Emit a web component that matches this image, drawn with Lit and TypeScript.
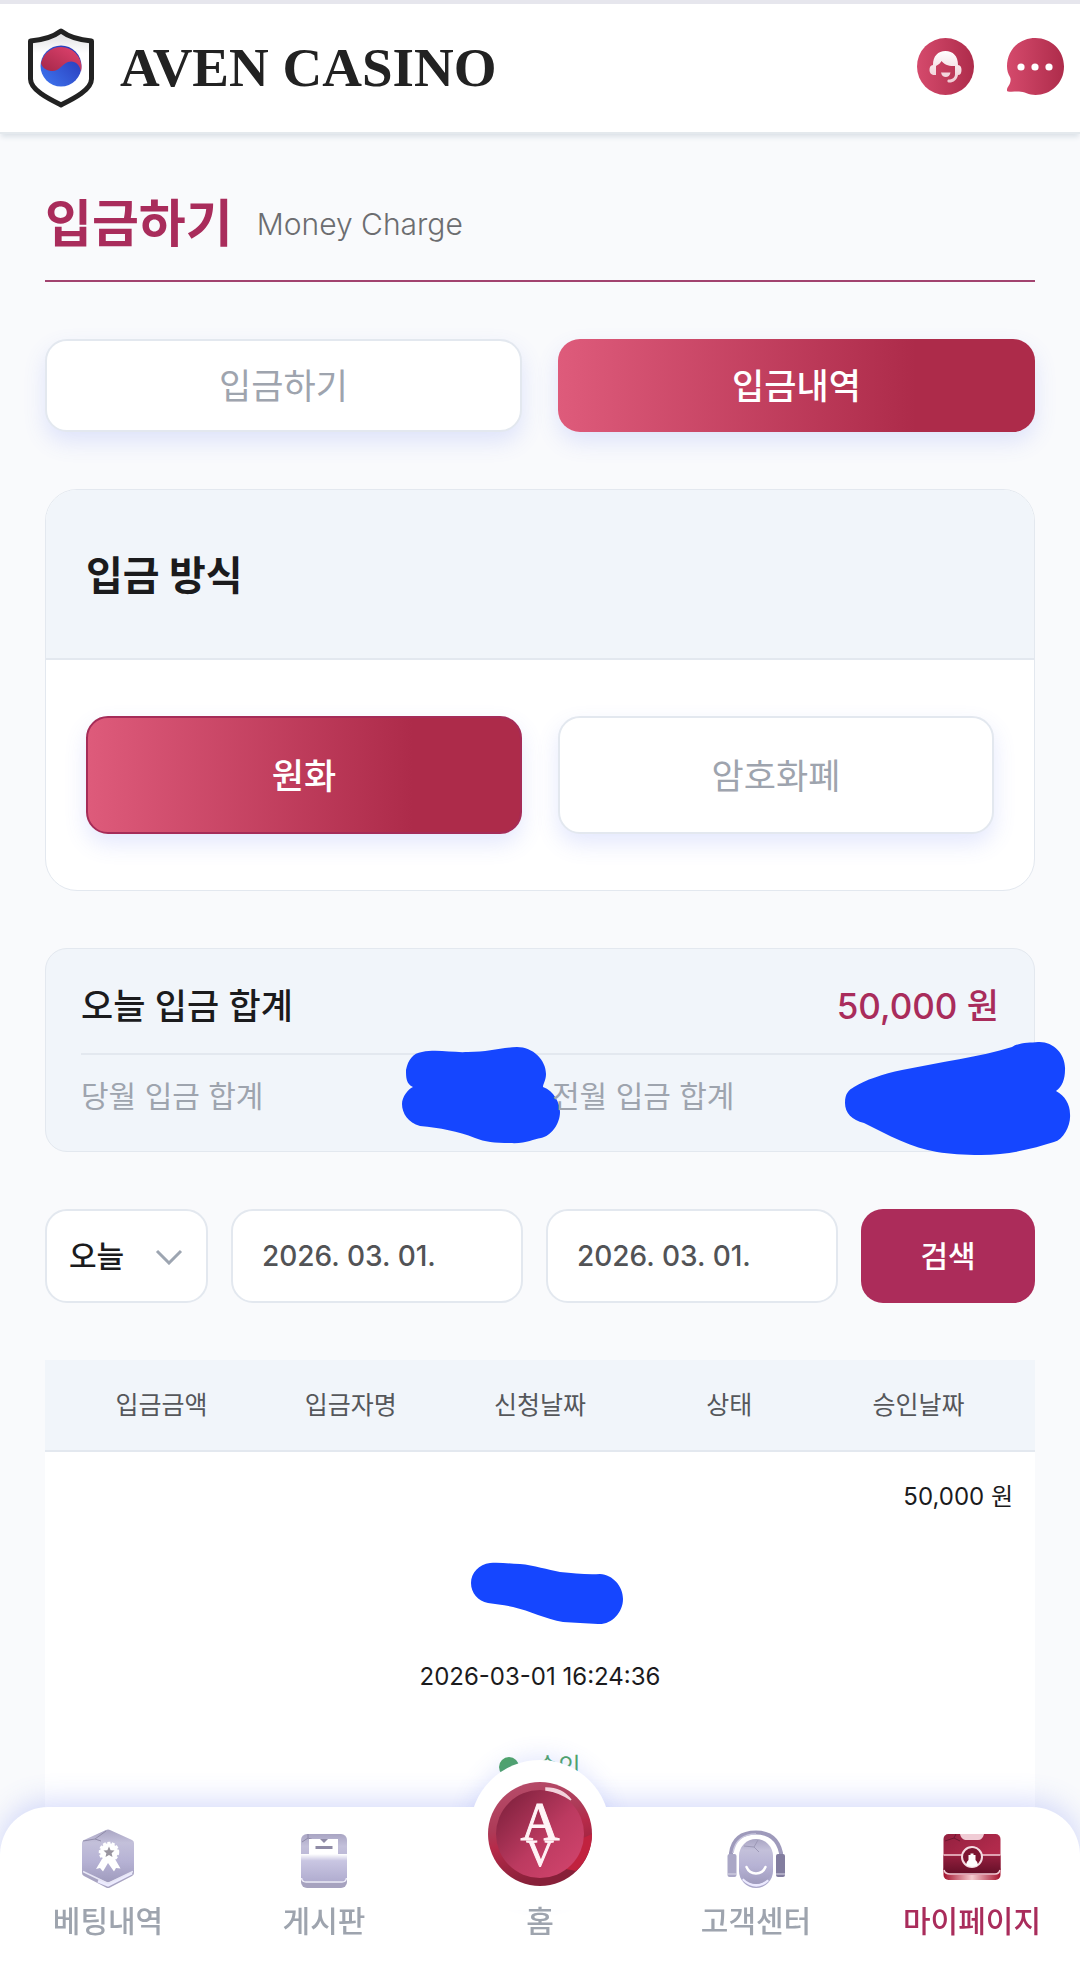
import { LitElement, html, css, svg } from "lit";
import { customElement, state } from "lit/decorators.js";
import { classMap } from "lit/directives/class-map.js";

const shield = html`<svg class="shield" viewBox="28 28 66 80" aria-hidden="true">
  <defs>
    <linearGradient id="sh" x1="0" y1="0" x2="0" y2="1"><stop offset="0" stop-color="#dcdcde"/><stop offset=".3" stop-color="#fff"/></linearGradient>
    <linearGradient id="rd" x1="1" y1="0" x2="0" y2="1"><stop offset="0" stop-color="#e2436f"/><stop offset="1" stop-color="#a32748"/></linearGradient>
    <linearGradient id="bl" x1="1" y1="0" x2="0" y2="1"><stop offset="0" stop-color="#2530b0"/><stop offset="1" stop-color="#3f78f2"/></linearGradient>
  </defs>
  <path d="M61 31 C69 37 79 40 91.500 41 V79 C91.500 90 73 99 61 105 C49 99 30.500 90 30.500 79 V41 C43 40 53 37 61 31Z" fill="url(#sh)" stroke="#222" stroke-width="5" stroke-linejoin="round"/>
  <circle cx="61" cy="66" r="20.500" fill="url(#bl)"/>
  <path d="M41 63 A20.500 20.500 0 0 1 81 72 C80 64 74 60 68 62 C62 64 59 72 51 71 C45 70 42 67 41 63Z" fill="url(#rd)"/>
</svg>`;

const agentIcon = html`<svg class="round-icon" viewBox="0 0 57 57" aria-hidden="true">
  <defs>
    <linearGradient id="ag" x1="0" x2="1"><stop offset="0" stop-color="#d54a6c"/><stop offset="1" stop-color="#ae2c4b"/></linearGradient>
    <linearGradient id="aw" x1="0" y1="0" x2="0" y2="1"><stop offset="0" stop-color="#fff"/><stop offset="1" stop-color="#eec9d1"/></linearGradient>
  </defs>
  <circle cx="28.500" cy="28.500" r="28.500" fill="url(#ag)"/>
  <path d="M16 27 C16 18 21 13 28.500 13 C36 13 41 18 41 27 C43.500 27.500 44.500 29 44.500 32 C44.500 35 43.500 37 41 37 C40 42 36 45 31.500 44.500 C30 44 30 42 31.500 41.500 C35 41.500 38 40 38 36 V28 C32 28.500 27 26.500 24.500 23 C23.500 25 21 27 19 28 V37 C15 37.500 12.500 35.500 12.500 32 C12.500 29 13.500 27.500 16 27Z" fill="url(#aw)"/>
  <path d="M24 34.500 H33.500 C33 37.500 31 39 28.800 39 C26.500 39 24.500 37.500 24 34.500Z" fill="#f3d5dc"/>
</svg>`;

const chatIcon = html`<svg class="round-icon" viewBox="0 0 57 57" aria-hidden="true">
  <defs><linearGradient id="ch" x1="0" x2="1"><stop offset="0" stop-color="#d54a6c"/><stop offset="1" stop-color="#ae2c4b"/></linearGradient></defs>
  <path d="M28.500 0 C44 0 57 12 57 28.500 C57 46 43 57 28.500 57 C22 57 17 53.500 12 53.500 C8 53.500 4 54 1 53.500 C-1 53 0 50 1.500 48 C3 46 4.500 42 3 39 C1 36 0 32 0 28.500 C0 12 12 0 28.500 0Z" fill="url(#ch)"/>
  <circle cx="14" cy="29" r="3.600" fill="#fff"/><circle cx="28" cy="29" r="3.600" fill="#fff"/><circle cx="42" cy="29" r="3.600" fill="#fff"/>
</svg>`;

const lilac = (id: string) => svg`<linearGradient id=${id} x1="0" y1="0" x2="0" y2="1"><stop offset="0" stop-color="#a9a5c3"/><stop offset=".25" stop-color="#c3c0da"/><stop offset=".6" stop-color="#b6b2d4"/><stop offset="1" stop-color="#9f9bbd"/></linearGradient>`;

const betsIcon = html`<svg class="nav-icon" viewBox="0 0 60 60" aria-hidden="true">
  <defs>${lilac("l1")}</defs>
  <path d="M4 40 L30 54 L56 40 V44 Q56 46 54 47 L32 58.500 Q30 59.500 28 58.500 L6 47 Q4 46 4 44Z" fill="#a8a4c2"/>
  <path d="M20 52 L30 56 L54 44" fill="none" stroke="#ecebff" stroke-width="3"/>
  <path d="M28 1 Q30 0 32 1 L54 11 Q56 12 56 14 V40 Q56 41.500 54 42.500 L32 53 Q30 54 28 53 L6 42.500 Q4 41.500 4 40 V14 Q4 12 6 11Z" fill="url(#l1)"/>
  <path d="M5 12 L17 10 L28 2 M17 10 L23 12" fill="none" stroke="#908ca9" stroke-width="1"/>
  <path d="M5 42.500 L28 53.500 Q30 54.500 32 53.500 L55 42.500" fill="none" stroke="#e8e7f6" stroke-width="1.500"/>
  <path d="M24 30 L18 40 L22 39 L25 42.500 L30 34 L36 42.500 L38 39 L42.500 39.500 L37 30Z" fill="#fff"/>
  <circle cx="31" cy="23" r="9" fill="#fff" stroke="#fff" stroke-width="2.500" stroke-dasharray="3 1.500"/>
  <path d="M31 17.500 L32.600 21.200 L36.500 21.600 L33.600 24.200 L34.500 28 L31 26 L27.500 28 L28.400 24.200 L25.500 21.600 L29.400 21.200Z" fill="#99959f"/>
</svg>`;

const boardIcon = html`<svg class="nav-icon" viewBox="0 0 60 60" aria-hidden="true">
  <defs>${lilac("l2")}<linearGradient id="fd" x1="0" y1="0" x2="0" y2="1"><stop offset="0" stop-color="#fff"/><stop offset=".25" stop-color="#c9c6e2"/><stop offset="1" stop-color="#b1add0"/></linearGradient></defs>
  <rect x="7" y="40" width="46" height="19" rx="6" fill="#a6a2bf"/>
  <rect x="7" y="5" width="46" height="49" rx="6" fill="url(#l2)"/>
  <path d="M8 13 L14 9 L20 11 M14 9 V5" fill="none" stroke="#8e8aa8"/>
  <rect x="15" y="10" width="29" height="20" fill="#fff"/>
  <path d="M26 10 H34 L30 14Z" fill="#8f8ba6"/>
  <rect x="21.500" y="17" width="17" height="3" fill="#8f8ba6"/>
  <path d="M7 25 H53 V48 Q53 52 48 52 H12 Q7 52 7 48Z" fill="url(#fd)"/>
  <path d="M7.500 49 Q8 53 12 53 H48 Q52 53 52.500 49" fill="none" stroke="#f0effa" stroke-width="1.500"/>
</svg>`;

const helpIcon = html`<svg class="nav-icon" viewBox="0 0 60 60" aria-hidden="true">
  <defs>${lilac("l3")}</defs>
  <path d="M5 28 V24 C7 10 16 3.500 30 3.500 C44 3.500 52 10 55 24 V28" fill="none" stroke="#9e9abb" stroke-width="4"/>
  <path d="M7 24 C9 11 18 5 30 5" fill="none" stroke="#cac8df" stroke-width="1.500"/>
  <rect x="13" y="14" width="34" height="45" rx="17" fill="#aaa7ca"/>
  <path d="M17 50 Q30 62 42 51" stroke="#eceaff" stroke-width="3" fill="none"/>
  <rect x="13" y="10" width="34" height="45" rx="17" fill="url(#l3)"/>
  <path d="M18 17 L28 18 L32 11 M28 18 L33 23" fill="none" stroke="#9c99b6"/>
  <path d="M20.500 38 C24 46.500 36 46.500 39.500 38" fill="none" stroke="#fff" stroke-width="2.500" stroke-linecap="round"/>
  <rect x="1.500" y="25" width="9" height="23" rx="2" fill="#aaa7c6"/><rect x="50" y="25" width="9" height="23" rx="2" fill="#827d9f"/>
  <path d="M1.500 45 H10.500 M50 45 H59" stroke="#dddbea" stroke-width="1"/>
</svg>`;

const walletIcon = html`<svg class="nav-icon" viewBox="0 0 60 60" aria-hidden="true">
  <defs>
    <linearGradient id="wt" x1="0" y1="0" x2="1" y2="1"><stop offset="0" stop-color="#93203f"/><stop offset=".6" stop-color="#b02a4b"/><stop offset="1" stop-color="#b82d4e"/></linearGradient>
    <linearGradient id="wl" x1="0" y1="0" x2="0" y2="1"><stop offset="0" stop-color="#96203f"/><stop offset="1" stop-color="#650f28"/></linearGradient>
    <linearGradient id="wb" x1="0" x2="1"><stop offset="0" stop-color="#a5122e"/><stop offset=".5" stop-color="#f5ccd0"/><stop offset="1" stop-color="#a5122e"/></linearGradient>
  </defs>
  <rect x="1.500" y="36" width="57" height="15" rx="5" fill="url(#wb)"/>
  <rect x="1.500" y="5" width="57" height="41" rx="5" fill="url(#wt)"/>
  <path d="M1.500 26 H58.500 V40 Q58.500 45 53.500 45 H6.500 Q1.500 45 1.500 40Z" fill="url(#wl)"/>
  <path d="M18 5 H42 C41 9 39 11 36 11 H25 C21 11 19 9 18 5Z" fill="#f0ccd5"/>
  <path d="M3 12 L12 9 L18 12 M12 9 L14 5" fill="none" stroke="#6e1730"/>
  <path d="M1.500 26 H58.500 M2 41 Q3 45 8 45 H53 Q57 45 58 41" fill="none" stroke="#f2ccd5" stroke-width="1.500"/>
  <circle cx="30" cy="28" r="10" fill="#7d1632" stroke="#f4dce2" stroke-width="2"/>
  <path d="M26.500 26 H28.500 V24.500 H31.500 V26 H33.500 V31 Q36 33 36 36 Q30 39.500 24 36 Q24 33 26.500 31Z" fill="#fff"/>
</svg>`;

const medallion = html`<svg class="medallion" viewBox="0 0 104 104" aria-hidden="true">
  <defs>
    <linearGradient id="m1" x1="0" y1="0" x2=".3" y2="1"><stop offset="0" stop-color="#b8506e"/><stop offset=".45" stop-color="#ad3a57"/><stop offset=".6" stop-color="#b62a49"/><stop offset="1" stop-color="#872039"/></linearGradient>
    <linearGradient id="m2" x1="0" y1="0" x2="1" y2="1"><stop offset=".15" stop-color="#892543"/><stop offset=".55" stop-color="#bc3a60"/><stop offset="1" stop-color="#d5466f"/></linearGradient>
  </defs>
  <circle cx="52" cy="52" r="52" fill="url(#m1)"/>
  <path d="M104 52 A52 52 0 0 1 88 89 L78 87 Q92 76 95 56Z" fill="#c1223f"/>
  <circle cx="52" cy="52" r="44" fill="url(#m2)"/>
  <path d="M58 6 Q74 6 83 18 Q72 10 58 8Z" fill="#f3d3dc" stroke="#f3d3dc" stroke-width="1.500"/>
  <text class="mono" x="52" y="58" font-size="54" text-anchor="middle">A</text>
  <text class="mono" x="52" y="84" font-size="38" text-anchor="middle">V</text>
</svg>`;

@customElement("app-root")
export class AppRoot extends LitElement {
  @state() private tab = 1;
  @state() private method = 0;

  static styles = css`
    :host {
      --crimson: #a92c5b;
      --muted: #9ea4ae;
      --line: #e3e8ef;
      --panel: #f1f5fa;
      --fade: linear-gradient(90deg, #de5b7b, #ad2b4a 75%);
      --glow: 0 10px 22px rgba(88, 110, 240, 0.16);
      display: block;
      min-height: 100vh;
      background: #f9fafc;
      color: #1b1b1d;
      font-family: Inter, "Noto Sans CJK KR", sans-serif;
      font-size: 30px;
    }
    * { box-sizing: border-box; }
    button, input, select { font: inherit; color: inherit; margin: 0; }
    button { border: 0; padding: 0; background: none; cursor: pointer; }
    a { color: inherit; text-decoration: none; }

    .header {
      display: flex;
      align-items: center;
      justify-content: space-between;
      height: 134px;
      padding: 0 16px 0 28px;
      background: #fff;
      border-top: 4px solid #e6e6ed;
      border-bottom: 2px solid #e4e9ed;
      box-shadow: 0 4px 5px -1px #dce2e8;
    }
    .brand { display: flex; align-items: center; gap: 26px; }
    .shield { width: 66px; height: 80px; }
    .brand-name {
      font: bold 55px/80px "Liberation Serif", serif;
      color: #222;
    }
    .actions { display: flex; gap: 33px; padding-bottom: 4px; }
    .action { display: flex; }
    .round-icon { width: 57px; height: 57px; }

    .main {
      display: flex;
      flex-direction: column;
      gap: 57px;
      padding: 48px 45px 0;
    }
    .heading {
      display: flex;
      align-items: center;
      gap: 24px;
      height: 100px;
      padding-bottom: 14px;
      border-bottom: 2px solid #a2436f;
    }
    .title { margin: 0; font-size: 51px; line-height: 80px; font-weight: 700; color: var(--crimson); }
    .subtitle { font-size: 30px; font-weight: 300; color: #6c6d70; }

    .pair { display: grid; grid-template-columns: 1fr 1fr; gap: 36px; }
    .choice {
      height: 93px;
      padding-bottom: 4px;
      border: 2px solid var(--line);
      border-radius: 22px;
      background: #fff;
      color: var(--muted);
      font-size: 35px;
      box-shadow: var(--glow);
    }
    .choice.tall { height: 118px; }
    .choice.on { border: 0; background: var(--fade); color: #fff; font-weight: 500; }
    .choice.tall.on { border: 2px solid #a52c58; background-origin: border-box; }

    .card {
      border: 1px solid var(--line);
      border-radius: 32px;
      background: #fff;
      overflow: hidden;
    }
    .card-title {
      margin: 0;
      padding: 4px 40px 0;
      font-size: 40px;
      line-height: 164px;
      font-weight: 700;
      background: var(--panel);
      border-bottom: 2px solid var(--line);
    }
    .card-body { padding: 56px 40px; }

    .totals {
      padding: 0 35px;
      border: 1px solid var(--line);
      border-radius: 22px;
      background: var(--panel);
    }
    .today {
      display: flex;
      justify-content: space-between;
      padding: 22px 0 12px;
      line-height: 70px;
      font-size: 35px;
      font-weight: 500;
      border-bottom: 2px solid var(--line);
    }
    .amount { color: var(--crimson); }
    .months {
      display: grid;
      grid-template-columns: 1fr 1fr;
      gap: 24px;
      padding: 16px 0 30px;
      line-height: 50px;
      color: var(--muted);
    }
    .month { position: relative; }
    .ink { position: absolute; fill: #1546ff; }
    .ink-a { left: 321px; top: -25px; width: 160px; height: 98px; }
    .ink-b { left: 292px; top: -31px; width: 228px; height: 116px; }
    .ink-c { left: 50%; margin-left: -69px; top: 20px; width: 153px; height: 64px; }

    .search { display: grid; grid-template-columns: 163fr 292fr 292fr 174fr; gap: 23px; }
    .field, .submit { height: 94px; width: 100%; min-width: 0; border-radius: 22px; }
    .field { border: 2px solid var(--line); background: #fff; }
    .period { position: relative; display: flex; }
    .period .field { appearance: none; padding: 0 22px; font-weight: 500; }
    .chevron { position: absolute; right: 25px; top: 40px; width: 28px; height: 16px; pointer-events: none; }
    .date { padding: 0 29px; font-size: 28px; font-weight: 500; color: #525356; }
    .submit { padding-bottom: 4px; background: #ac2c5a; color: #fff; font-weight: 500; }

    .table { display: block; background: #fff; }
    .thead, .tbody { display: block; }
    .thead-row {
      display: grid;
      grid-template-columns: repeat(5, 1fr);
      padding: 0 22px;
      background: var(--panel);
      border-bottom: 2px solid var(--line);
      color: #55575b;
    }
    .th { padding: 0; font-size: 25px; line-height: 90px; font-weight: 400; text-align: center; }
    .row { display: block; }
    .td { display: block; position: relative; height: 90px; padding: 0 22px; font-size: 24px; line-height: 90px; text-align: center; }
    .td.num { text-align: right; }
    .status { display: flex; align-items: center; justify-content: center; gap: 17px; color: #4fa567; }
    .dot { width: 20px; height: 20px; border-radius: 50%; background: #4fa567; }

    .nav {
      position: fixed;
      left: 0;
      right: 0;
      bottom: 0;
      display: grid;
      grid-template-columns: repeat(5, 1fr);
      height: 156px;
      padding-top: 22px;
      background: #fff;
      border-radius: 48px 48px 0 0;
      box-shadow: 0 -6px 28px rgba(88, 110, 240, 0.24);
    }
    .nav-item {
      position: relative;
      display: flex;
      flex-direction: column;
      align-items: center;
      gap: 8px;
      line-height: 48px;
      color: var(--muted);
      font-weight: 500;
    }
    .nav-item.current { color: var(--crimson); }
    .nav-icon { width: 60px; height: 60px; }
    .home { justify-content: flex-end; padding-bottom: 18px; }
    .disc {
      position: absolute;
      top: -69px;
      display: grid;
      place-items: center;
      width: 140px;
      height: 140px;
      padding-top: 7px;
      border-radius: 50%;
      background: #fff;
      box-shadow: 0 -4px 22px rgba(88, 110, 240, 0.16);
    }
    .disc::after {
      content: "";
      position: absolute;
      inset: 47px -30px -10px;
      background: #fff;
    }
    .medallion { position: relative; z-index: 1; width: 104px; height: 104px; }
    .home-label { position: relative; z-index: 1; }
    .mono { font-family: "Liberation Serif", serif; fill: #fff3f6; stroke: #fff3f6; stroke-width: 1px; }
  `;

  private choice(label: string, on: boolean, tall: boolean, pick: () => void) {
    return html`<button type="button" class=${classMap({ choice: true, on, tall })} aria-pressed=${on} @click=${pick}>${label}</button>`;
  }

  render() {
    return html`
      <header class="header">
        <a class="brand" href="#">${shield}<span class="brand-name">AVEN CASINO</span></a>
        <div class="actions">
          <a class="action" href="#" aria-label="고객센터">${agentIcon}</a>
          <a class="action" href="#" aria-label="채팅">${chatIcon}</a>
        </div>
      </header>
      <main class="main">
        <div class="heading"><h1 class="title">입금하기</h1><span class="subtitle">Money Charge</span></div>
        <div class="pair">
          ${["입금하기", "입금내역"].map((t, i) => this.choice(t, this.tab === i, false, () => (this.tab = i)))}
        </div>
        <section class="card">
          <h2 class="card-title">입금 방식</h2>
          <div class="card-body pair">
            ${["원화", "암호화폐"].map((t, i) => this.choice(t, this.method === i, true, () => (this.method = i)))}
          </div>
        </section>
        <section class="totals">
          <div class="today"><span>오늘 입금 합계</span><span class="amount">50,000 원</span></div>
          <div class="months">
            <div class="month">당월 입금 합계
              <svg class="ink ink-a" viewBox="402 1046 160 98" aria-hidden="true"><path d="M422 1052 C438 1049 452 1053 468 1052 C488 1052 500 1048 517 1047 C533 1047 546 1060 546 1074 C546 1080 543 1084 543 1087 C554 1091 560 1103 560 1112 C560 1124 551 1136 541 1138 C533 1139 526 1144 510 1143 C494 1143 485 1142 475 1138 C458 1131 440 1128 420 1126 C408 1123 402 1113 402 1104 C402 1097 408 1089 413 1087 C406 1084 406 1077 406 1070 C408 1060 413 1053 422 1052Z"/></svg>
            </div>
            <div class="month">전월 입금 합계
              <svg class="ink ink-b" viewBox="844 1040 228 116" aria-hidden="true"><path d="M1012 1047 C1020 1042 1030 1043 1038 1042 C1053 1041 1066 1054 1065 1070 C1065 1079 1062 1087 1056 1091 C1065 1096 1070 1104 1070 1114 C1071 1125 1064 1139 1054 1142 C1035 1148 1010 1155 981 1155 C963 1155 950 1154 937 1152 C912 1148 888 1135 864 1123 C852 1120 845 1113 845 1103 C845 1093 849 1090 854 1087 C865 1080 883 1074 902 1070 C940 1062 980 1057 1012 1047Z"/></svg>
            </div>
          </div>
        </section>
        <form class="search" @submit=${(e: Event) => e.preventDefault()}>
          <div class="period">
            <select class="field" aria-label="기간"><option>오늘</option></select>
            <svg class="chevron" viewBox="0 0 28 16" aria-hidden="true"><path d="M2 2 L14 14 L26 2" fill="none" stroke="#9da5b1" stroke-width="3"/></svg>
          </div>
          <input class="field date" type="text" aria-label="시작일" value="2026. 03. 01." />
          <input class="field date" type="text" aria-label="종료일" value="2026. 03. 01." />
          <button class="submit" type="submit">검색</button>
        </form>
        <table class="table">
          <thead class="thead">
            <tr class="thead-row">${["입금금액", "입금자명", "신청날짜", "상태", "승인날짜"].map((t) => html`<th class="th" scope="col">${t}</th>`)}</tr>
          </thead>
          <tbody class="tbody">
            <tr class="row">
              <td class="td num">50,000 원</td>
              <td class="td"><svg class="ink ink-c" viewBox="471 1562 153 64" aria-hidden="true"><path d="M490 1563 C500 1562 510 1564 520 1564 C534 1565 548 1570 560 1572 C574 1573 586 1575 600 1574 C613 1575 623 1586 623 1599 C623 1613 611 1625 598 1624 C586 1623 574 1623 563 1622 C546 1619 530 1611 513 1607 C504 1605 496 1604 488 1603 C478 1601 471 1593 471 1583 C471 1573 479 1564 490 1563Z"/></svg></td>
              <td class="td">2026-03-01 16:24:36</td>
              <td class="td status"><span class="dot"></span>승인</td>
              <td class="td"></td>
            </tr>
          </tbody>
        </table>
      </main>
      <nav class="nav">
        <a class="nav-item" href="#">${betsIcon}<span>베팅내역</span></a>
        <a class="nav-item" href="#">${boardIcon}<span>게시판</span></a>
        <a class="nav-item home" href="#"><span class="disc">${medallion}</span><span class="home-label">홈</span></a>
        <a class="nav-item" href="#">${helpIcon}<span>고객센터</span></a>
        <a class="nav-item current" href="#" aria-current="page">${walletIcon}<span>마이페이지</span></a>
      </nav>
    `;
  }
}
